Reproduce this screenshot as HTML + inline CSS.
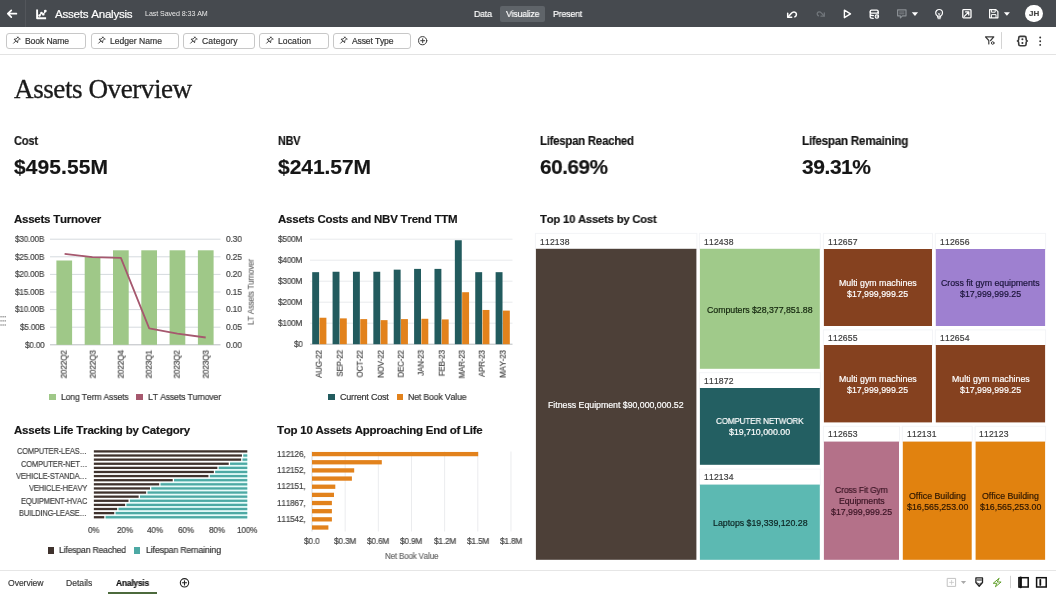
<!DOCTYPE html>
<html lang="en"><head><meta charset="utf-8"><title>Assets Analysis</title>
<style>
html,body{margin:0;padding:0;background:#fff;}
body{width:1056px;height:594px;position:relative;overflow:hidden;font-family:"Liberation Sans",sans-serif;font-kerning:none;-webkit-font-smoothing:antialiased;}
.t{position:absolute;white-space:nowrap;line-height:1;display:block;will-change:transform;-webkit-text-stroke:.18px;}
.r{position:absolute;display:block;}
svg{position:absolute;left:0;top:0;overflow:visible;}
header,nav,main,section,footer{position:absolute;left:0;top:0;display:block;}
header{width:1056px;height:27px;background:#464a4f;}
nav.filters{top:27px;width:1056px;height:27px;background:#fff;border-bottom:1px solid #e3e3e3;}
.chip{position:absolute;top:5.5px;height:16px;border:1px solid #c8c8c8;border-radius:3px;background:#fff;box-sizing:border-box;}
footer{top:570px;width:1056px;height:24px;background:#fff;border-top:1px solid #e6e6e6;}
.hd{position:absolute;background:#fff;box-shadow:0 0 0 1px #f1f1f1;}
</style></head><body>

<header>
<div class="r" style="left:25.00px;top:0.00px;width:1.00px;height:27.00px;background:rgba(255,255,255,0.07);"></div>
<span class="t" style="left:55.40px;top:8.28px;font-size:11.6px;color:#fff;letter-spacing:-0.255px;">Assets Analysis</span>
<span class="t" style="left:144.50px;top:10.99px;font-size:7.1px;color:#e8e8e8;letter-spacing:-0.066px;-webkit-text-stroke:0;">Last Saved 8:33 AM</span>
<span class="t" style="left:473.50px;top:9.04px;font-size:9.4px;color:#fff;transform-origin:0 0;transform:scaleX(0.9368);letter-spacing:-0.207px;">Data</span>
<div class="r" style="left:500.00px;top:5.50px;width:44.50px;height:16.50px;background:#5f6469;border-radius:2px;"></div>
<span class="t" style="left:505.50px;top:9.04px;font-size:9.4px;color:#fff;transform-origin:0 0;transform:scaleX(0.9289);letter-spacing:-0.207px;">Visualize</span>
<span class="t" style="left:552.80px;top:9.04px;font-size:9.4px;color:#fff;transform-origin:0 0;transform:scaleX(0.9408);letter-spacing:-0.207px;">Present</span>
<div class="r" style="left:1025.20px;top:4.60px;width:17.80px;height:17.80px;background:#fff;border-radius:50%;"></div>
<span class="t" style="left:1028.95px;top:10.03px;font-size:8.0px;color:#444;letter-spacing:0.100px;font-weight:700;">JH</span>
<svg width="1056" height="27" viewBox="0 0 1056 27" fill="none" stroke="#fff" stroke-width="1.4" stroke-linecap="round" stroke-linejoin="round">
<path d="M16.400 13.700H8M11.300 10.300L7.800 13.700l3.500 3.400" stroke-width="1.700"/>
<path d="M37.1 9.600v8.700h9" stroke-width="1.900" stroke-linecap="butt"/>
<path d="M39.400 15.600l2-2.500 1.800 1.300 2.200-3.200" stroke-width="1.100"/>
<circle cx="39.500" cy="15.500" r="1.200" fill="#fff" stroke="none"/><circle cx="41.500" cy="13" r="1.300" fill="#fff" stroke="none"/><circle cx="43.300" cy="14.400" r="1.200" fill="#fff" stroke="none"/><circle cx="45.300" cy="11.100" r="1.400" fill="#fff" stroke="none"/>
<!-- undo -->
<path d="M787.700 13.300v4h4" stroke-width="1.500"/>
<path d="M788.100 16.900l3.300-3.700c1.400-1.600 3.800-1.700 4.700-.1.700 1.300.2 2.900-1.300 3.700" stroke-width="1.500"/>
<!-- redo dim -->
<g stroke="#71767b" stroke-width="1.300"><path d="M824 15.900l-2.700-3c-1.100-1.300-3.100-1.400-3.800-.1-.6 1.100-.2 2.400 1 3"/><path d="M824.300 12.900v3.300h-3.300"/></g>
<!-- play -->
<path d="M844.400 10.100l6.100 3.800-6.100 3.800z" stroke-width="1.400"/>
<!-- dataset -->
<g stroke-width="1.300"><rect x="870.200" y="10.200" width="8" height="2.900" rx="1.300"/><path d="M870.200 12v5c0 .8 1.200 1.300 3 1.400M878.200 12v1.800M870.200 14.600c.3.600 1.500 1 3.200 1"/><circle cx="876.900" cy="16.600" r="1.700" stroke-width="1.100"/><path d="M878.300 15.400v1.400h-1.400" stroke-width=".9"/></g>
<!-- comment dim -->
<g stroke="#8a8f94" stroke-width="1.2"><path d="M897.6 9.8h8.4v6h-3.6l-2 2v-2h-2.8z"/><path d="M899.6 12h4.4M899.6 13.8h4.4" stroke-width=".8"/></g>
<path d="M911.8 12.3h6.3l-3.15 3.700z" fill="#fff" stroke="none"/>
<!-- bulb -->
<g stroke-width="1.200"><path d="M937.600 16.100c-1.200-.9-1.900-1.900-1.900-3.200a3.400 3.400 0 0 1 6.800 0c0 1.300-.7 2.300-1.900 3.200v1.100h-3z"/><path d="M938 18.700h2.300M939.100 16.800v-2.600M938.100 13.400l1 .9 1-.9" stroke-width=".9"/></g>
<!-- export -->
<g stroke-width="1.300"><rect x="962.800" y="9.700" width="8.200" height="8.200" rx=".8"/><path d="M964.300 16.400l4.300-4.300M965.600 11.900h3.200v3.200"/></g>
<!-- save -->
<g stroke-width="1.200"><path d="M989.600 9.600h6.300l2 2v6.200h-8.300z"/><path d="M991.400 9.800v2.400h3.800v-2.400M991.400 17.600v-3h4.600v3" stroke-width="1"/></g>
<path d="M1003.900 12.200h6l-3 3.500z" fill="#fff" stroke="none"/>
</svg>
</header>
<nav class="filters">
<div class="chip" style="left:6px;width:80px;"></div>
<span class="t" style="left:24.60px;top:9.72px;font-size:8.6px;color:#333;letter-spacing:-0.111px;">Book Name</span>
<div class="chip" style="left:91px;width:88px;"></div>
<span class="t" style="left:109.50px;top:9.72px;font-size:8.6px;color:#333;letter-spacing:-0.007px;">Ledger Name</span>
<div class="chip" style="left:183px;width:72px;"></div>
<span class="t" style="left:201.50px;top:9.72px;font-size:8.6px;color:#333;letter-spacing:0.090px;">Category</span>
<div class="chip" style="left:259px;width:70px;"></div>
<span class="t" style="left:277.70px;top:9.72px;font-size:8.6px;color:#333;letter-spacing:0.076px;">Location</span>
<div class="chip" style="left:333px;width:78px;"></div>
<span class="t" style="left:351.50px;top:9.72px;font-size:8.6px;color:#333;letter-spacing:-0.166px;">Asset Type</span>
<svg width="1056" height="27" viewBox="0 27 1056 27" fill="none" stroke="#3a3a3a" stroke-width=".9" stroke-linecap="round" stroke-linejoin="round"><g transform="translate(16.2 40.6) rotate(45)"><path d="M-1.6 -3.6h3.2M-1.2 -3.6v2.6l-1.300 1.500h5l-1.300-1.500v-2.600M0 .5v3.200"/></g><g transform="translate(101.2 40.6) rotate(45)"><path d="M-1.6 -3.6h3.2M-1.2 -3.6v2.6l-1.300 1.500h5l-1.300-1.500v-2.600M0 .5v3.200"/></g><g transform="translate(193.2 40.6) rotate(45)"><path d="M-1.6 -3.6h3.2M-1.2 -3.6v2.6l-1.300 1.500h5l-1.300-1.500v-2.600M0 .5v3.200"/></g><g transform="translate(269.2 40.6) rotate(45)"><path d="M-1.6 -3.6h3.2M-1.2 -3.6v2.6l-1.300 1.500h5l-1.300-1.500v-2.600M0 .5v3.200"/></g><g transform="translate(343.2 40.6) rotate(45)"><path d="M-1.6 -3.6h3.2M-1.2 -3.6v2.6l-1.300 1.500h5l-1.300-1.500v-2.600M0 .5v3.200"/></g><circle cx="422.700" cy="40.700" r="4.100" stroke-width="1"/><path d="M420.700 40.700h4M422.700 38.700v4" stroke-width="1"/><path d="M985.500 36.900h8.300l-3.200 3.600M985.500 36.900l3.300 3.600v3.500" stroke-width="1.200"/><circle cx="992.700" cy="43" r="1.300" stroke-width="1"/><path d="M1001.500 32.500v16" stroke="#d4d4d4" stroke-width="1"/><g stroke-width="1.600"><path d="M1020.300 36.400c-1.100 0-1.600.5-1.600 1.500v1.400c0 .8-.4 1.400-1.200 1.700.8.300 1.200.9 1.200 1.700v1.500c0 1 .5 1.500 1.600 1.500h4.200c1.100 0 1.600-.5 1.600-1.500v-1.500c0-.8.400-1.400 1.200-1.700-.8-.3-1.200-.9-1.200-1.700v-1.400c0-1-.5-1.500-1.600-1.500z"/></g><circle cx="1022.400" cy="39.200" r="1.050" fill="#333" stroke="none"/><circle cx="1022.400" cy="43" r="1.050" fill="#333" stroke="none"/><circle cx="1040.2" cy="37.5" r=".95" fill="#333" stroke="none"/><circle cx="1040.2" cy="41.2" r=".95" fill="#333" stroke="none"/><circle cx="1040.2" cy="44.9" r=".95" fill="#333" stroke="none"/></svg>
</nav>
<main>
<span class="t" style="left:13.70px;top:75.62px;font-size:27.2px;color:#1b1b1b;letter-spacing:-0.488px;font-family:'Liberation Serif',serif;-webkit-text-stroke:.3px #1b1b1b;">Assets Overview</span>
<span class="t" style="left:14.00px;top:134.87px;font-size:12.2px;color:#161616;transform-origin:0 0;transform:scaleX(0.9133);letter-spacing:-0.268px;font-weight:700;">Cost</span>
<span class="t" style="left:14.00px;top:156.42px;font-size:21px;color:#161616;letter-spacing:0.094px;font-weight:700;">$495.55M</span>
<span class="t" style="left:277.50px;top:134.87px;font-size:12.2px;color:#161616;transform-origin:0 0;transform:scaleX(0.8948);letter-spacing:-0.268px;font-weight:700;">NBV</span>
<span class="t" style="left:277.50px;top:156.42px;font-size:21px;color:#161616;letter-spacing:-0.049px;font-weight:700;">$241.57M</span>
<span class="t" style="left:540.00px;top:134.87px;font-size:12.2px;color:#161616;transform-origin:0 0;transform:scaleX(0.9373);letter-spacing:-0.268px;font-weight:700;">Lifespan Reached</span>
<span class="t" style="left:540.00px;top:156.42px;font-size:21px;color:#161616;transform-origin:0 0;transform:scaleX(0.9872);letter-spacing:-0.462px;font-weight:700;">60.69%</span>
<span class="t" style="left:801.50px;top:134.87px;font-size:12.2px;color:#161616;transform-origin:0 0;transform:scaleX(0.9566);letter-spacing:-0.268px;font-weight:700;">Lifespan Remaining</span>
<span class="t" style="left:801.50px;top:156.42px;font-size:21px;color:#161616;letter-spacing:-0.438px;font-weight:700;">39.31%</span>
<span class="t" style="left:14.40px;top:213.67px;font-size:11.5px;color:#161616;letter-spacing:-0.247px;font-weight:700;">Assets Turnover</span>
<span class="t" style="left:277.60px;top:213.67px;font-size:11.5px;color:#161616;letter-spacing:-0.218px;font-weight:700;">Assets Costs and NBV Trend TTM</span>
<span class="t" style="left:539.90px;top:213.67px;font-size:11.5px;color:#161616;transform-origin:0 0;transform:scaleX(0.9865);letter-spacing:-0.253px;font-weight:700;">Top 10 Assets by Cost</span>
<span class="t" style="left:14.40px;top:425.37px;font-size:11.5px;color:#161616;letter-spacing:-0.190px;font-weight:700;">Assets Life Tracking by Category</span>
<span class="t" style="left:277.30px;top:425.37px;font-size:11.5px;color:#161616;letter-spacing:-0.248px;font-weight:700;">Top 10 Assets Approaching End of Life</span>
<svg width="10" height="20" style="left:0;top:312px" viewBox="0 312 10 20" stroke="#777" stroke-width="1" stroke-dasharray="1.500 .6"><path d="M.300 316.800h6.300M.300 320.900h6.300M.300 325h6.300"/></svg>
<section>
<svg width="1056" height="594" viewBox="0 0 1056 594" shape-rendering="auto"><path d="M50 239.20H220.500" stroke="#d5dade" stroke-width="1"/><path d="M50 256.80H220.500" stroke="#d5dade" stroke-width="1"/><path d="M50 274.40H220.500" stroke="#d5dade" stroke-width="1"/><path d="M50 292.00H220.500" stroke="#d5dade" stroke-width="1"/><path d="M50 309.60H220.500" stroke="#d5dade" stroke-width="1"/><path d="M50 327.20H220.500" stroke="#d5dade" stroke-width="1"/><path d="M50 344.80H220.500" stroke="#b9bdc0" stroke-width="1"/><rect x="56.40" y="260.50" width="15.7" height="84.30" fill="#9fc888"/><rect x="84.70" y="257.00" width="15.7" height="87.80" fill="#9fc888"/><rect x="113.00" y="250.30" width="15.7" height="94.50" fill="#9fc888"/><rect x="141.30" y="250.30" width="15.7" height="94.50" fill="#9fc888"/><rect x="169.60" y="250.30" width="15.7" height="94.50" fill="#9fc888"/><rect x="197.90" y="250.30" width="15.7" height="94.50" fill="#9fc888"/><polyline fill="none" stroke="#a6586e" stroke-width="1.8" stroke-linejoin="round" points="64.6,253.8 92.4,257.2 120.9,257.9 149.2,328.3 177.4,333.6 205.7,337.5"/></svg>
<span class="t" style="left:15.43px;top:234.93px;font-size:8.6px;color:#424242;transform-origin:0 0;transform:scaleX(0.9487);letter-spacing:-0.189px;">$30.00B</span>
<span class="t" style="left:226.30px;top:234.93px;font-size:8.6px;color:#424242;transform-origin:0 0;transform:scaleX(0.9778);letter-spacing:-0.189px;">0.30</span>
<span class="t" style="left:15.43px;top:252.53px;font-size:8.6px;color:#424242;transform-origin:0 0;transform:scaleX(0.9487);letter-spacing:-0.189px;">$25.00B</span>
<span class="t" style="left:226.30px;top:252.53px;font-size:8.6px;color:#424242;transform-origin:0 0;transform:scaleX(0.9778);letter-spacing:-0.189px;">0.25</span>
<span class="t" style="left:15.43px;top:270.13px;font-size:8.6px;color:#424242;transform-origin:0 0;transform:scaleX(0.9487);letter-spacing:-0.189px;">$20.00B</span>
<span class="t" style="left:226.30px;top:270.13px;font-size:8.6px;color:#424242;transform-origin:0 0;transform:scaleX(0.9778);letter-spacing:-0.189px;">0.20</span>
<span class="t" style="left:15.43px;top:287.73px;font-size:8.6px;color:#424242;transform-origin:0 0;transform:scaleX(0.9487);letter-spacing:-0.189px;">$15.00B</span>
<span class="t" style="left:226.30px;top:287.73px;font-size:8.6px;color:#424242;transform-origin:0 0;transform:scaleX(0.9778);letter-spacing:-0.189px;">0.15</span>
<span class="t" style="left:15.43px;top:305.33px;font-size:8.6px;color:#424242;transform-origin:0 0;transform:scaleX(0.9487);letter-spacing:-0.189px;">$10.00B</span>
<span class="t" style="left:226.30px;top:305.33px;font-size:8.6px;color:#424242;transform-origin:0 0;transform:scaleX(0.9778);letter-spacing:-0.189px;">0.10</span>
<span class="t" style="left:19.79px;top:322.93px;font-size:8.6px;color:#424242;transform-origin:0 0;transform:scaleX(0.9479);letter-spacing:-0.189px;">$5.00B</span>
<span class="t" style="left:226.30px;top:322.93px;font-size:8.6px;color:#424242;transform-origin:0 0;transform:scaleX(0.9778);letter-spacing:-0.189px;">0.05</span>
<span class="t" style="left:25.03px;top:340.53px;font-size:8.6px;color:#424242;transform-origin:0 0;transform:scaleX(0.9484);letter-spacing:-0.189px;">$0.00</span>
<span class="t" style="left:226.30px;top:340.53px;font-size:8.6px;color:#424242;transform-origin:0 0;transform:scaleX(0.9778);letter-spacing:-0.189px;">0.00</span>
<span class="t" style="left:67.26px;top:350.30px;font-size:8.6px;color:#424242;transform-origin:0 0;transform:rotate(-90deg) translate(-28.40px,-7.28px) scaleX(0.9586);letter-spacing:-0.189px;">2022Q2</span>
<span class="t" style="left:95.56px;top:350.30px;font-size:8.6px;color:#424242;transform-origin:0 0;transform:rotate(-90deg) translate(-28.40px,-7.28px) scaleX(0.9586);letter-spacing:-0.189px;">2022Q3</span>
<span class="t" style="left:123.86px;top:350.30px;font-size:8.6px;color:#424242;transform-origin:0 0;transform:rotate(-90deg) translate(-28.40px,-7.28px) scaleX(0.9586);letter-spacing:-0.189px;">2022Q4</span>
<span class="t" style="left:152.16px;top:350.30px;font-size:8.6px;color:#424242;transform-origin:0 0;transform:rotate(-90deg) translate(-28.40px,-7.28px) scaleX(0.9586);letter-spacing:-0.189px;">2023Q1</span>
<span class="t" style="left:180.46px;top:350.30px;font-size:8.6px;color:#424242;transform-origin:0 0;transform:rotate(-90deg) translate(-28.40px,-7.28px) scaleX(0.9586);letter-spacing:-0.189px;">2023Q2</span>
<span class="t" style="left:208.76px;top:350.30px;font-size:8.6px;color:#424242;transform-origin:0 0;transform:rotate(-90deg) translate(-28.40px,-7.28px) scaleX(0.9586);letter-spacing:-0.189px;">2023Q3</span>
<span class="t" style="left:253.51px;top:292.40px;font-size:8.6px;color:#6a6a6a;transform-origin:0 0;transform:rotate(-90deg) translate(-33.00px,-7.28px) scaleX(0.9193);letter-spacing:-0.189px;">LT Assets Turnover</span>
<div class="r" style="left:49.00px;top:393.60px;width:6.60px;height:6.60px;background:#9fc888;"></div>
<span class="t" style="left:61.10px;top:393.08px;font-size:9.0px;color:#333;transform-origin:0 0;transform:scaleX(0.9652);letter-spacing:-0.198px;">Long Term Assets</span>
<div class="r" style="left:136.30px;top:393.60px;width:6.60px;height:6.60px;background:#a6586e;"></div>
<span class="t" style="left:147.70px;top:393.08px;font-size:9.0px;color:#333;transform-origin:0 0;transform:scaleX(0.9730);letter-spacing:-0.198px;">LT Assets Turnover</span>
</section>
<section>
<svg width="1056" height="594" viewBox="0 0 1056 594"><path d="M310 239.20H512.500" stroke="#e8eaec" stroke-width="1"/><path d="M310 260.20H512.500" stroke="#e8eaec" stroke-width="1"/><path d="M310 281.20H512.500" stroke="#e8eaec" stroke-width="1"/><path d="M310 302.20H512.500" stroke="#e8eaec" stroke-width="1"/><path d="M310 323.20H512.500" stroke="#e8eaec" stroke-width="1"/><path d="M310 344.20H512.500" stroke="#b9bdc0" stroke-width="1"/><rect x="312.20" y="272.17" width="6.9" height="72.03" fill="#225b5e"/><rect x="319.50" y="317.74" width="6.9" height="26.46" fill="#e2821c"/><rect x="332.58" y="271.75" width="6.9" height="72.45" fill="#225b5e"/><rect x="339.88" y="318.37" width="6.9" height="25.83" fill="#e2821c"/><rect x="352.96" y="271.75" width="6.9" height="72.45" fill="#225b5e"/><rect x="360.26" y="319.10" width="6.9" height="25.10" fill="#e2821c"/><rect x="373.34" y="271.75" width="6.9" height="72.45" fill="#225b5e"/><rect x="380.64" y="320.15" width="6.9" height="24.05" fill="#e2821c"/><rect x="393.72" y="269.65" width="6.9" height="74.55" fill="#225b5e"/><rect x="401.02" y="319.10" width="6.9" height="25.10" fill="#e2821c"/><rect x="414.10" y="268.89" width="6.9" height="75.31" fill="#225b5e"/><rect x="421.40" y="318.79" width="6.9" height="25.41" fill="#e2821c"/><rect x="434.48" y="268.89" width="6.9" height="75.31" fill="#225b5e"/><rect x="441.78" y="319.42" width="6.9" height="24.78" fill="#e2821c"/><rect x="454.86" y="240.25" width="6.9" height="103.95" fill="#225b5e"/><rect x="462.16" y="292.22" width="6.9" height="51.98" fill="#e2821c"/><rect x="475.24" y="272.17" width="6.9" height="72.03" fill="#225b5e"/><rect x="482.54" y="309.97" width="6.9" height="34.23" fill="#e2821c"/><rect x="495.62" y="272.17" width="6.9" height="72.03" fill="#225b5e"/><rect x="502.92" y="310.60" width="6.9" height="33.60" fill="#e2821c"/></svg>
<span class="t" style="left:278.47px;top:234.93px;font-size:8.6px;color:#424242;transform-origin:0 0;transform:scaleX(0.9576);letter-spacing:-0.189px;">$500M</span>
<span class="t" style="left:278.47px;top:255.93px;font-size:8.6px;color:#424242;transform-origin:0 0;transform:scaleX(0.9576);letter-spacing:-0.189px;">$400M</span>
<span class="t" style="left:278.47px;top:276.93px;font-size:8.6px;color:#424242;transform-origin:0 0;transform:scaleX(0.9576);letter-spacing:-0.189px;">$300M</span>
<span class="t" style="left:278.47px;top:297.93px;font-size:8.6px;color:#424242;transform-origin:0 0;transform:scaleX(0.9576);letter-spacing:-0.189px;">$200M</span>
<span class="t" style="left:278.47px;top:318.93px;font-size:8.6px;color:#424242;transform-origin:0 0;transform:scaleX(0.9576);letter-spacing:-0.189px;">$100M</span>
<span class="t" style="left:294.02px;top:339.93px;font-size:8.6px;color:#424242;transform-origin:0 0;transform:scaleX(0.9488);letter-spacing:-0.189px;">$0</span>
<span class="t" style="left:322.41px;top:350.20px;font-size:8.6px;color:#424242;transform-origin:0 0;transform:rotate(-90deg) translate(-27.94px,-7.28px) scaleX(0.9283);letter-spacing:-0.189px;">AUG-22</span>
<span class="t" style="left:342.79px;top:350.20px;font-size:8.6px;color:#424242;transform-origin:0 0;transform:rotate(-90deg) translate(-26.63px,-7.28px) scaleX(0.9297);letter-spacing:-0.189px;">SEP-22</span>
<span class="t" style="left:363.17px;top:350.20px;font-size:8.6px;color:#424242;transform-origin:0 0;transform:rotate(-90deg) translate(-27.51px,-7.28px) scaleX(0.9287);letter-spacing:-0.189px;">OCT-22</span>
<span class="t" style="left:383.55px;top:350.20px;font-size:8.6px;color:#424242;transform-origin:0 0;transform:rotate(-90deg) translate(-27.93px,-7.28px) scaleX(0.9283);letter-spacing:-0.189px;">NOV-22</span>
<span class="t" style="left:403.93px;top:350.20px;font-size:8.6px;color:#424242;transform-origin:0 0;transform:rotate(-90deg) translate(-27.48px,-7.28px) scaleX(0.9288);letter-spacing:-0.189px;">DEC-22</span>
<span class="t" style="left:424.31px;top:350.20px;font-size:8.6px;color:#424242;transform-origin:0 0;transform:rotate(-90deg) translate(-25.77px,-7.28px) scaleX(0.9307);letter-spacing:-0.189px;">JAN-23</span>
<span class="t" style="left:444.69px;top:350.20px;font-size:8.6px;color:#424242;transform-origin:0 0;transform:rotate(-90deg) translate(-26.20px,-7.28px) scaleX(0.9302);letter-spacing:-0.189px;">FEB-23</span>
<span class="t" style="left:465.07px;top:350.20px;font-size:8.6px;color:#424242;transform-origin:0 0;transform:rotate(-90deg) translate(-28.37px,-7.28px) scaleX(0.9278);letter-spacing:-0.189px;">MAR-23</span>
<span class="t" style="left:485.45px;top:350.20px;font-size:8.6px;color:#424242;transform-origin:0 0;transform:rotate(-90deg) translate(-27.05px,-7.28px) scaleX(0.9292);letter-spacing:-0.189px;">APR-23</span>
<span class="t" style="left:505.83px;top:350.20px;font-size:8.6px;color:#424242;transform-origin:0 0;transform:rotate(-90deg) translate(-27.92px,-7.28px) scaleX(0.9283);letter-spacing:-0.189px;">MAY-23</span>
<div class="r" style="left:328.30px;top:393.60px;width:6.60px;height:6.60px;background:#225b5e;"></div>
<span class="t" style="left:339.90px;top:393.08px;font-size:9.0px;color:#333;letter-spacing:-0.198px;">Current Cost</span>
<div class="r" style="left:396.80px;top:393.60px;width:6.60px;height:6.60px;background:#e2821c;"></div>
<span class="t" style="left:408.00px;top:393.08px;font-size:9.0px;color:#333;transform-origin:0 0;transform:scaleX(0.9754);letter-spacing:-0.198px;">Net Book Value</span>
</section>
<section>
<svg width="1056" height="594" viewBox="0 0 1056 594"><rect x="93.85" y="450.25" width="153.45" height="2.3" fill="#3f322d"/><rect x="93.85" y="454.37" width="148.08" height="2.3" fill="#3f322d"/><rect x="243.23" y="453.47" width="4.07" height="4.10" fill="#e2faf8"/><rect x="243.23" y="454.37" width="4.07" height="2.3" fill="#4da9a4"/><rect x="93.85" y="458.48" width="147.31" height="2.3" fill="#3f322d"/><rect x="242.46" y="457.58" width="4.84" height="4.10" fill="#e2faf8"/><rect x="242.46" y="458.48" width="4.84" height="2.3" fill="#4da9a4"/><rect x="93.85" y="462.60" width="134.88" height="2.3" fill="#3f322d"/><rect x="230.03" y="461.70" width="17.27" height="4.10" fill="#e2faf8"/><rect x="230.03" y="462.60" width="17.27" height="2.3" fill="#4da9a4"/><rect x="93.85" y="466.71" width="123.53" height="2.3" fill="#3f322d"/><rect x="218.68" y="465.81" width="28.62" height="4.10" fill="#e2faf8"/><rect x="218.68" y="466.71" width="28.62" height="2.3" fill="#4da9a4"/><rect x="93.85" y="470.82" width="120.00" height="2.3" fill="#3f322d"/><rect x="215.15" y="469.93" width="32.15" height="4.10" fill="#e2faf8"/><rect x="215.15" y="470.82" width="32.15" height="2.3" fill="#4da9a4"/><rect x="93.85" y="474.94" width="114.63" height="2.3" fill="#3f322d"/><rect x="209.78" y="474.04" width="37.52" height="4.10" fill="#e2faf8"/><rect x="209.78" y="474.94" width="37.52" height="2.3" fill="#4da9a4"/><rect x="93.85" y="479.06" width="78.87" height="2.3" fill="#3f322d"/><rect x="174.02" y="478.16" width="73.28" height="4.10" fill="#e2faf8"/><rect x="174.02" y="479.06" width="73.28" height="2.3" fill="#4da9a4"/><rect x="93.85" y="483.17" width="65.37" height="2.3" fill="#3f322d"/><rect x="160.52" y="482.27" width="86.78" height="4.10" fill="#e2faf8"/><rect x="160.52" y="483.17" width="86.78" height="2.3" fill="#4da9a4"/><rect x="93.85" y="487.29" width="56.16" height="2.3" fill="#3f322d"/><rect x="151.31" y="486.39" width="95.99" height="4.10" fill="#e2faf8"/><rect x="151.31" y="487.29" width="95.99" height="2.3" fill="#4da9a4"/><rect x="93.85" y="491.40" width="52.33" height="2.3" fill="#3f322d"/><rect x="147.48" y="490.50" width="99.82" height="4.10" fill="#e2faf8"/><rect x="147.48" y="491.40" width="99.82" height="2.3" fill="#4da9a4"/><rect x="93.85" y="495.51" width="44.81" height="2.3" fill="#3f322d"/><rect x="139.96" y="494.62" width="107.34" height="4.10" fill="#e2faf8"/><rect x="139.96" y="495.51" width="107.34" height="2.3" fill="#4da9a4"/><rect x="93.85" y="499.63" width="34.68" height="2.3" fill="#3f322d"/><rect x="129.83" y="498.73" width="117.47" height="4.10" fill="#e2faf8"/><rect x="129.83" y="499.63" width="117.47" height="2.3" fill="#4da9a4"/><rect x="93.85" y="503.75" width="31.30" height="2.3" fill="#3f322d"/><rect x="126.45" y="502.85" width="120.85" height="4.10" fill="#e2faf8"/><rect x="126.45" y="503.75" width="120.85" height="2.3" fill="#4da9a4"/><rect x="93.85" y="507.86" width="23.32" height="2.3" fill="#3f322d"/><rect x="118.47" y="506.96" width="128.83" height="4.10" fill="#e2faf8"/><rect x="118.47" y="507.86" width="128.83" height="2.3" fill="#4da9a4"/><rect x="93.85" y="511.98" width="20.41" height="2.3" fill="#3f322d"/><rect x="115.56" y="511.08" width="131.74" height="4.10" fill="#e2faf8"/><rect x="115.56" y="511.98" width="131.74" height="2.3" fill="#4da9a4"/><rect x="93.85" y="516.09" width="10.43" height="2.3" fill="#3f322d"/><rect x="105.58" y="515.19" width="141.72" height="4.10" fill="#e2faf8"/><rect x="105.58" y="516.09" width="141.72" height="2.3" fill="#4da9a4"/></svg>
<span class="t" style="left:16.90px;top:447.33px;font-size:8.6px;color:#424242;transform-origin:0 0;transform:scaleX(0.8739);letter-spacing:-0.189px;">COMPUTER-LEAS…</span>
<span class="t" style="left:20.60px;top:459.68px;font-size:8.6px;color:#424242;transform-origin:0 0;transform:scaleX(0.8780);letter-spacing:-0.189px;">COMPUTER-NET…</span>
<span class="t" style="left:15.90px;top:472.02px;font-size:8.6px;color:#424242;transform-origin:0 0;transform:scaleX(0.8838);letter-spacing:-0.189px;">VEHICLE-STANDA…</span>
<span class="t" style="left:28.60px;top:484.37px;font-size:8.6px;color:#424242;transform-origin:0 0;transform:scaleX(0.8781);letter-spacing:-0.189px;">VEHICLE-HEAVY</span>
<span class="t" style="left:20.60px;top:496.71px;font-size:8.6px;color:#424242;transform-origin:0 0;transform:scaleX(0.8804);letter-spacing:-0.189px;">EQUIPMENT-HVAC</span>
<span class="t" style="left:18.90px;top:509.06px;font-size:8.6px;color:#424242;transform-origin:0 0;transform:scaleX(0.8823);letter-spacing:-0.189px;">BUILDING-LEASE…</span>
<span class="t" style="left:88.07px;top:525.82px;font-size:8.6px;color:#424242;transform-origin:0 0;transform:scaleX(0.9444);letter-spacing:-0.189px;">0%</span>
<span class="t" style="left:116.54px;top:525.82px;font-size:8.6px;color:#424242;transform-origin:0 0;transform:scaleX(0.9509);letter-spacing:-0.189px;">20%</span>
<span class="t" style="left:147.23px;top:525.82px;font-size:8.6px;color:#424242;transform-origin:0 0;transform:scaleX(0.9509);letter-spacing:-0.189px;">40%</span>
<span class="t" style="left:177.92px;top:525.82px;font-size:8.6px;color:#424242;transform-origin:0 0;transform:scaleX(0.9509);letter-spacing:-0.189px;">60%</span>
<span class="t" style="left:208.61px;top:525.82px;font-size:8.6px;color:#424242;transform-origin:0 0;transform:scaleX(0.9509);letter-spacing:-0.189px;">80%</span>
<span class="t" style="left:237.08px;top:525.82px;font-size:8.6px;color:#424242;transform-origin:0 0;transform:scaleX(0.9547);letter-spacing:-0.189px;">100%</span>
<div class="r" style="left:47.60px;top:547.00px;width:6.50px;height:6.50px;background:#3f322d;"></div>
<span class="t" style="left:58.80px;top:546.18px;font-size:9.0px;color:#333;transform-origin:0 0;transform:scaleX(0.9643);letter-spacing:-0.198px;">Lifespan Reached</span>
<div class="r" style="left:133.80px;top:547.00px;width:6.50px;height:6.50px;background:#4da9a4;"></div>
<span class="t" style="left:145.70px;top:546.18px;font-size:9.0px;color:#333;transform-origin:0 0;transform:scaleX(0.9861);letter-spacing:-0.198px;">Lifespan Remaining</span>
</section>
<section>
<svg width="1056" height="594" viewBox="0 0 1056 594"><path d="M312.00 451.500V531.500" stroke="#d6d9dc" stroke-width="1"/><path d="M345.16 451.500V531.500" stroke="#ebecee" stroke-width="1"/><path d="M378.32 451.500V531.500" stroke="#ebecee" stroke-width="1"/><path d="M411.48 451.500V531.500" stroke="#ebecee" stroke-width="1"/><path d="M444.64 451.500V531.500" stroke="#ebecee" stroke-width="1"/><path d="M477.80 451.500V531.500" stroke="#ebecee" stroke-width="1"/><path d="M510.96 451.500V531.500" stroke="#ebecee" stroke-width="1"/><rect x="312.0" y="451.95" width="166.2" height="4.3" fill="#e2821c"/><rect x="312.0" y="460.11" width="69.8" height="4.3" fill="#e2821c"/><rect x="312.0" y="468.26" width="42.2" height="4.3" fill="#e2821c"/><rect x="312.0" y="476.42" width="39.9" height="4.3" fill="#e2821c"/><rect x="312.0" y="484.57" width="23.3" height="4.3" fill="#e2821c"/><rect x="312.0" y="492.73" width="22.0" height="4.3" fill="#e2821c"/><rect x="312.0" y="500.88" width="19.9" height="4.3" fill="#e2821c"/><rect x="312.0" y="509.04" width="19.9" height="4.3" fill="#e2821c"/><rect x="312.0" y="517.19" width="19.9" height="4.3" fill="#e2821c"/><rect x="312.0" y="525.35" width="16.4" height="4.3" fill="#e2821c"/></svg>
<span class="t" style="left:277.30px;top:449.83px;font-size:8.6px;color:#424242;transform-origin:0 0;transform:scaleX(0.9565);letter-spacing:-0.189px;">112126,</span>
<span class="t" style="left:277.30px;top:466.14px;font-size:8.6px;color:#424242;transform-origin:0 0;transform:scaleX(0.9565);letter-spacing:-0.189px;">112152,</span>
<span class="t" style="left:277.30px;top:482.45px;font-size:8.6px;color:#424242;transform-origin:0 0;transform:scaleX(0.9565);letter-spacing:-0.189px;">112151,</span>
<span class="t" style="left:277.30px;top:498.76px;font-size:8.6px;color:#424242;transform-origin:0 0;transform:scaleX(0.9568);letter-spacing:-0.189px;">111867,</span>
<span class="t" style="left:277.30px;top:515.07px;font-size:8.6px;color:#424242;transform-origin:0 0;transform:scaleX(0.9568);letter-spacing:-0.189px;">111542,</span>
<span class="t" style="left:304.22px;top:537.32px;font-size:8.6px;color:#424242;transform-origin:0 0;transform:scaleX(0.9627);letter-spacing:-0.189px;">$0.0</span>
<span class="t" style="left:334.04px;top:537.32px;font-size:8.6px;color:#424242;transform-origin:0 0;transform:scaleX(0.9604);letter-spacing:-0.189px;">$0.3M</span>
<span class="t" style="left:367.20px;top:537.32px;font-size:8.6px;color:#424242;transform-origin:0 0;transform:scaleX(0.9604);letter-spacing:-0.189px;">$0.6M</span>
<span class="t" style="left:400.36px;top:537.32px;font-size:8.6px;color:#424242;transform-origin:0 0;transform:scaleX(0.9604);letter-spacing:-0.189px;">$0.9M</span>
<span class="t" style="left:433.52px;top:537.32px;font-size:8.6px;color:#424242;transform-origin:0 0;transform:scaleX(0.9604);letter-spacing:-0.189px;">$1.2M</span>
<span class="t" style="left:466.68px;top:537.32px;font-size:8.6px;color:#424242;transform-origin:0 0;transform:scaleX(0.9604);letter-spacing:-0.189px;">$1.5M</span>
<span class="t" style="left:499.84px;top:537.32px;font-size:8.6px;color:#424242;transform-origin:0 0;transform:scaleX(0.9604);letter-spacing:-0.189px;">$1.8M</span>
<span class="t" style="left:384.75px;top:552.76px;font-size:8.2px;color:#6a6a6a;transform-origin:0 0;transform:scaleX(0.9807);letter-spacing:-0.180px;">Net Book Value</span>
</section>
<section>
<svg width="1056" height="594" viewBox="0 0 1056 594"><rect x="535.40" y="233.40" width="161.50" height="15.90" fill="#fff" stroke="#f3f4f7" stroke-width="1"/><rect x="535.90" y="248.80" width="160.50" height="311.00" fill="#4d4038"/><rect x="699.40" y="233.40" width="120.90" height="15.90" fill="#fff" stroke="#f3f4f7" stroke-width="1"/><rect x="699.90" y="248.80" width="119.90" height="120.00" fill="#a0ca8a"/><rect x="699.40" y="372.70" width="120.90" height="15.80" fill="#fff" stroke="#f3f4f7" stroke-width="1"/><rect x="699.90" y="388.00" width="119.90" height="76.80" fill="#235f62"/><rect x="699.40" y="469.10" width="120.90" height="16.00" fill="#fff" stroke="#f3f4f7" stroke-width="1"/><rect x="699.90" y="484.60" width="119.90" height="75.20" fill="#5cb9b2"/><rect x="823.40" y="233.40" width="109.10" height="16.10" fill="#fff" stroke="#f3f4f7" stroke-width="1"/><rect x="823.90" y="249.00" width="108.10" height="77.00" fill="#85411f"/><rect x="935.30" y="233.40" width="110.30" height="16.10" fill="#fff" stroke="#f3f4f7" stroke-width="1"/><rect x="935.80" y="249.00" width="109.30" height="77.00" fill="#9e80d0"/><rect x="823.40" y="329.90" width="109.10" height="15.60" fill="#fff" stroke="#f3f4f7" stroke-width="1"/><rect x="823.90" y="345.00" width="108.10" height="77.40" fill="#85411f"/><rect x="935.30" y="329.90" width="110.30" height="15.60" fill="#fff" stroke="#f3f4f7" stroke-width="1"/><rect x="935.80" y="345.00" width="109.30" height="77.40" fill="#85411f"/><rect x="823.40" y="426.30" width="76.10" height="15.80" fill="#fff" stroke="#f3f4f7" stroke-width="1"/><rect x="823.90" y="441.60" width="75.10" height="118.20" fill="#b47189"/><rect x="902.30" y="426.30" width="69.90" height="15.80" fill="#fff" stroke="#f3f4f7" stroke-width="1"/><rect x="902.80" y="441.60" width="68.90" height="118.20" fill="#e1820f"/><rect x="975.10" y="426.30" width="70.50" height="15.80" fill="#fff" stroke="#f3f4f7" stroke-width="1"/><rect x="975.60" y="441.60" width="69.50" height="118.20" fill="#e1820f"/></svg>
<span class="t" style="left:539.70px;top:237.53px;font-size:8.6px;color:#3c3c3c;letter-spacing:0.174px;">112138</span>
<span class="t" style="left:548.40px;top:400.96px;font-size:8.8px;color:#fff;letter-spacing:-0.029px;">Fitness Equipment $90,000,000.52</span>
<span class="t" style="left:703.70px;top:237.53px;font-size:8.6px;color:#3c3c3c;letter-spacing:0.174px;">112438</span>
<span class="t" style="left:707.05px;top:305.76px;font-size:8.8px;color:#12240c;letter-spacing:-0.044px;">Computers $28,377,851.88</span>
<span class="t" style="left:703.70px;top:376.83px;font-size:8.6px;color:#3c3c3c;letter-spacing:0.176px;">111872</span>
<span class="t" style="left:716.10px;top:417.16px;font-size:8.8px;color:#fff;transform-origin:0 0;transform:scaleX(0.9232);letter-spacing:-0.194px;">COMPUTER NETWORK</span>
<span class="t" style="left:729.35px;top:428.36px;font-size:8.8px;color:#fff;letter-spacing:-0.009px;">$19,710,000.00</span>
<span class="t" style="left:703.70px;top:473.23px;font-size:8.6px;color:#3c3c3c;letter-spacing:0.174px;">112134</span>
<span class="t" style="left:712.60px;top:518.56px;font-size:8.8px;color:#0c2422;letter-spacing:-0.017px;">Laptops $19,339,120.28</span>
<span class="t" style="left:827.70px;top:237.53px;font-size:8.6px;color:#3c3c3c;letter-spacing:0.174px;">112657</span>
<span class="t" style="left:839.05px;top:278.66px;font-size:8.8px;color:#fff;">Multi gym machines</span>
<span class="t" style="left:847.45px;top:289.56px;font-size:8.8px;color:#fff;letter-spacing:-0.009px;">$17,999,999.25</span>
<span class="t" style="left:939.60px;top:237.53px;font-size:8.6px;color:#3c3c3c;letter-spacing:0.174px;">112656</span>
<span class="t" style="left:941.10px;top:278.66px;font-size:8.8px;color:#1a1338;letter-spacing:-0.026px;">Cross fit gym equipments</span>
<span class="t" style="left:959.95px;top:289.56px;font-size:8.8px;color:#1a1338;letter-spacing:-0.009px;">$17,999,999.25</span>
<span class="t" style="left:827.70px;top:334.03px;font-size:8.6px;color:#3c3c3c;letter-spacing:0.174px;">112655</span>
<span class="t" style="left:839.05px;top:374.66px;font-size:8.8px;color:#fff;">Multi gym machines</span>
<span class="t" style="left:847.45px;top:385.66px;font-size:8.8px;color:#fff;letter-spacing:-0.009px;">$17,999,999.25</span>
<span class="t" style="left:939.60px;top:334.03px;font-size:8.6px;color:#3c3c3c;letter-spacing:0.174px;">112654</span>
<span class="t" style="left:951.55px;top:374.66px;font-size:8.8px;color:#fff;">Multi gym machines</span>
<span class="t" style="left:959.95px;top:385.66px;font-size:8.8px;color:#fff;letter-spacing:-0.009px;">$17,999,999.25</span>
<span class="t" style="left:827.70px;top:430.43px;font-size:8.6px;color:#3c3c3c;letter-spacing:0.174px;">112653</span>
<span class="t" style="left:834.95px;top:486.36px;font-size:8.8px;color:#3a1424;transform-origin:0 0;transform:scaleX(0.9823);letter-spacing:-0.194px;">Cross Fit Gym</span>
<span class="t" style="left:838.60px;top:496.96px;font-size:8.8px;color:#3a1424;letter-spacing:-0.080px;">Equipments</span>
<span class="t" style="left:830.95px;top:507.86px;font-size:8.8px;color:#3a1424;letter-spacing:-0.009px;">$17,999,999.25</span>
<span class="t" style="left:906.60px;top:430.43px;font-size:8.6px;color:#3c3c3c;letter-spacing:0.174px;">112131</span>
<span class="t" style="left:908.85px;top:491.66px;font-size:8.8px;color:#2c1600;letter-spacing:0.009px;">Office Building</span>
<span class="t" style="left:906.60px;top:502.56px;font-size:8.8px;color:#2c1600;letter-spacing:0.014px;">$16,565,253.00</span>
<span class="t" style="left:979.40px;top:430.43px;font-size:8.6px;color:#3c3c3c;letter-spacing:0.174px;">112123</span>
<span class="t" style="left:981.95px;top:491.66px;font-size:8.8px;color:#2c1600;letter-spacing:0.009px;">Office Building</span>
<span class="t" style="left:979.70px;top:502.56px;font-size:8.8px;color:#2c1600;letter-spacing:0.014px;">$16,565,253.00</span>
</section>
</main>
<footer>
<span class="t" style="left:7.50px;top:8.02px;font-size:8.6px;color:#3a3a3a;letter-spacing:-0.046px;">Overview</span>
<span class="t" style="left:66.30px;top:8.02px;font-size:8.6px;color:#3a3a3a;letter-spacing:-0.005px;">Details</span>
<span class="t" style="left:116.30px;top:8.02px;font-size:8.6px;color:#111;transform-origin:0 0;transform:scaleX(0.9759);letter-spacing:-0.189px;font-weight:700;">Analysis</span>
<div class="r" style="left:108.00px;top:21.00px;width:49.00px;height:2.20px;background:#4c6a3c;"></div>
<svg width="1056" height="23" viewBox="0 571 1056 23" fill="none" stroke="#222" stroke-width="1.1" stroke-linecap="round" stroke-linejoin="round">
<circle cx="184.500" cy="582.800" r="4.200"/><path d="M182.400 582.800h4.200M184.500 580.700v4.200"/>
<g stroke="#c2c2c2" stroke-width="1"><rect x="947.600" y="578.400" width="8" height="8"/><path d="M951.600 580.400v4M949.600 582.400h4" stroke-width=".7"/></g>
<path d="M960.900 581h5.200l-2.600 3z" fill="#a9a9a9" stroke="none"/>
<g stroke-width="1.3"><path d="M975.9 577.900h6.600v4.600l-3.300 3.700-3.300-3.700z"/><path d="M977 579.900h4.400" stroke="#666" stroke-width="1.5"/><path d="M977.700 582.900l1.500 1.500 1.500-1.500" stroke-width=".9"/></g>
<path d="M998.900 578.500l-5.700 4.800h3.600l-1.400 3.500 5.700-4.800h-3.500z" stroke="#62a02c" stroke-width="1"/>
<path d="M1010.500 576.200v11.600" stroke="#d2d2d2" stroke-width="1"/>
<g stroke="#111" stroke-width="1.500" stroke-linejoin="miter"><rect x="1018.900" y="577.700" width="9.300" height="9.300"/><path d="M1020.600 577.700v9.300" stroke-width="2.600"/><rect x="1036.600" y="577.700" width="9.600" height="9.300"/><path d="M1040.300 579.800v5.100" stroke-width="1.800"/></g>
</svg>
</footer>
</body></html>
